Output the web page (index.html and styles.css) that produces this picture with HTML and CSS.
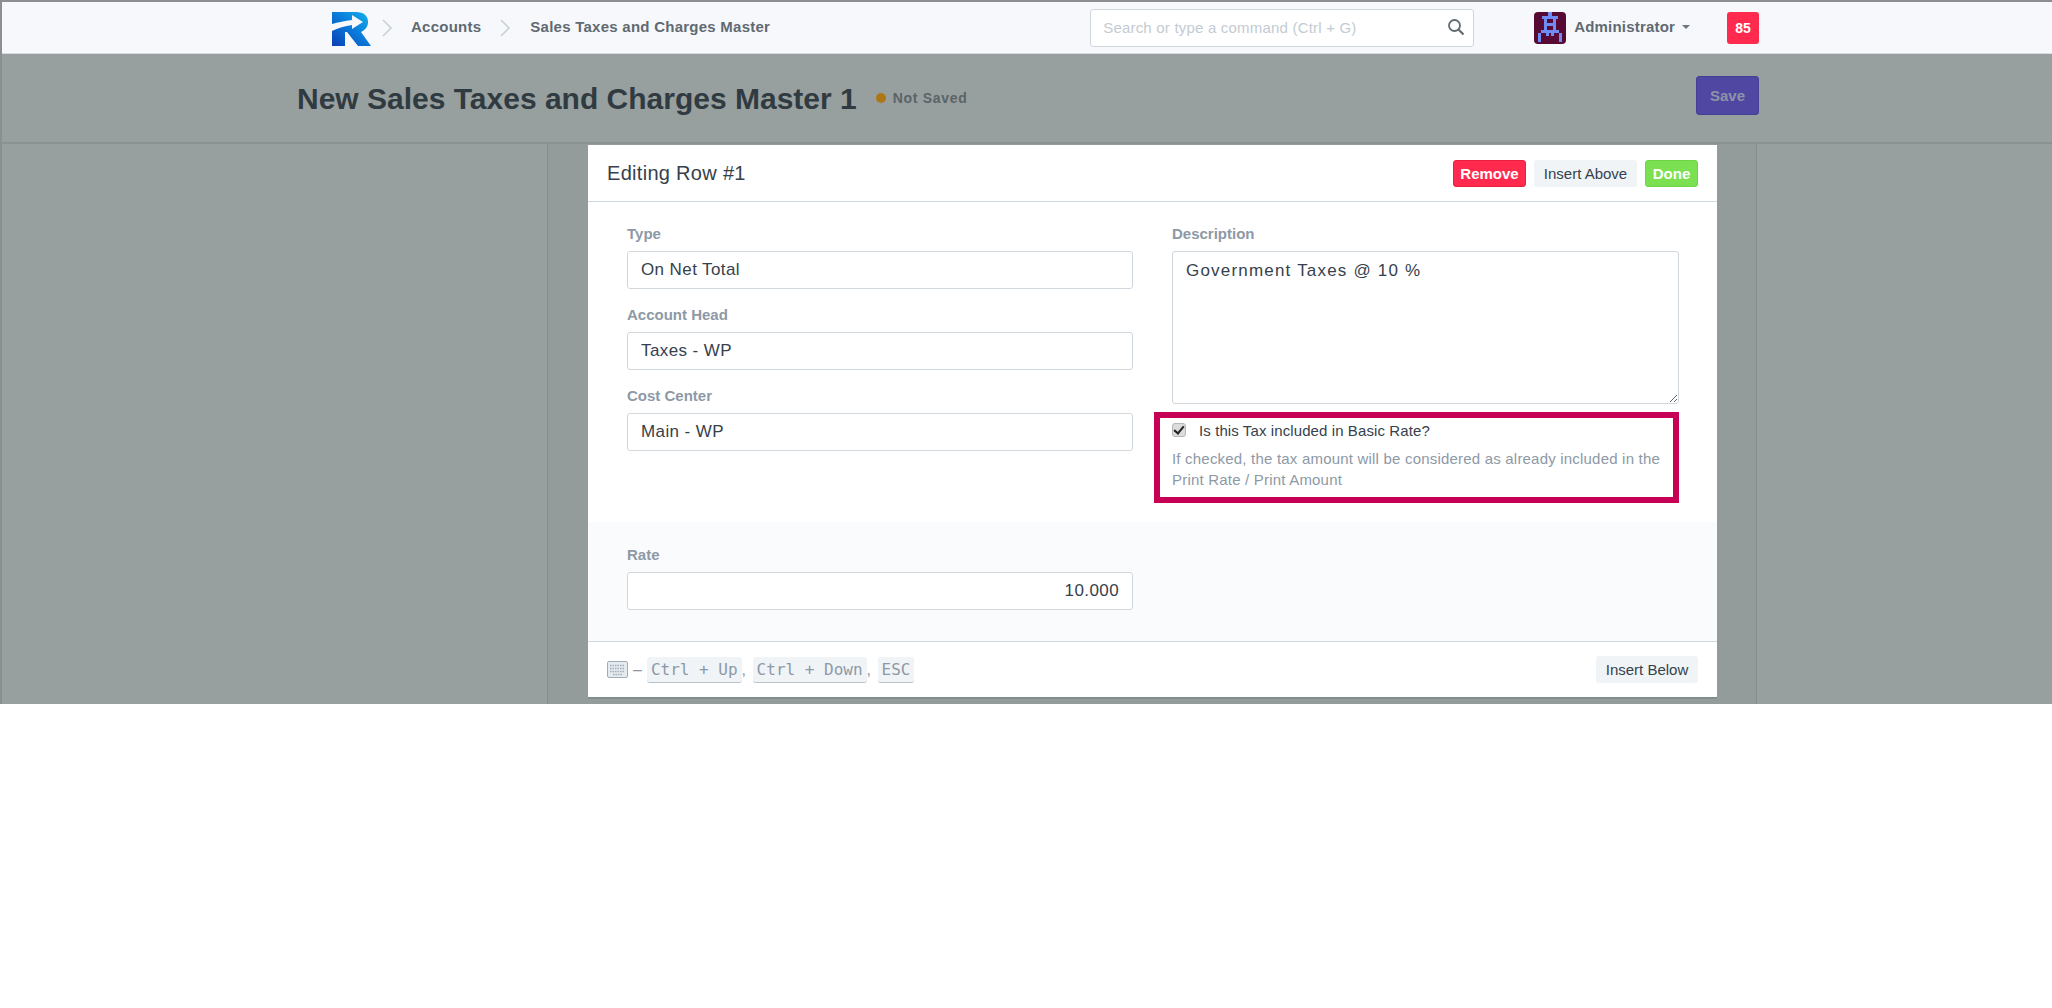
FILE: index.html
```html
<!DOCTYPE html>
<html lang="en">
<head>
  <meta charset="UTF-8" />
  <title>New Sales Taxes and Charges Master 1</title>
  <link rel="stylesheet" href="styles.css">
</head>
<body>
<div class="app">

  <nav class="navbar">
    <div class="container nav-inner">
      <svg class="logo" viewBox="0 0 39 34" width="39" height="34">
        <defs>
          <linearGradient id="logoBlue" x1="0" y1="1" x2="1" y2="0">
            <stop offset="0" stop-color="#0a3fb5"/>
            <stop offset="0.55" stop-color="#0a7fdc"/>
            <stop offset="1" stop-color="#12b5ea"/>
          </linearGradient>
        </defs>
        <path fill="url(#logoBlue)" d="M0 0H24C32 0 36 4 36 10C36 15 33 18 29 20L39 34H26L15 20H13V34H0Z"/>
        <path fill="#f7f8fb" d="M0 19V12C6 10 13 9 20 8V3L31 10L20 17V13C13 14 6 16 0 19Z"/>
      </svg>
      <svg class="crumb-sep" viewBox="0 0 12 18" width="12" height="18"><path d="M2 1L10 9L2 17" fill="none" stroke="#c8d0d8" stroke-width="1.6"/></svg>
      <a class="crumb">Accounts</a>
      <svg class="crumb-sep" viewBox="0 0 12 18" width="12" height="18"><path d="M2 1L10 9L2 17" fill="none" stroke="#c8d0d8" stroke-width="1.6"/></svg>
      <a class="crumb">Sales Taxes and Charges Master</a>

      <div class="search">
        <input type="text" placeholder="Search or type a command (Ctrl + G)">
        <svg viewBox="0 0 18 18" width="18" height="18"><circle cx="7.5" cy="7.5" r="5.5" fill="none" stroke="#5f6a72" stroke-width="1.8"/><path d="M11.5 11.5L16.5 16.5" stroke="#5f6a72" stroke-width="2.2"/></svg>
      </div>

      <svg class="avatar" viewBox="0 0 32 32" width="32" height="32">
        <rect width="32" height="32" rx="4" fill="#560a34"/>
        <g fill="#6f8cf5">
          <rect x="14" y="0" width="4" height="4"/>
          <rect x="8" y="4" width="16" height="3"/>
          <rect x="10" y="7" width="3" height="12"/>
          <rect x="19" y="7" width="3" height="12"/>
          <rect x="13" y="11" width="6" height="3"/>
          <rect x="7" y="18" width="18" height="3"/>
          <rect x="4" y="21" width="3" height="9"/>
          <rect x="25" y="21" width="3" height="9"/>
          <rect x="12" y="21" width="3" height="3"/>
          <rect x="17" y="21" width="3" height="3"/>
        </g>
      </svg>
      <a class="user">Administrator</a>
      <span class="caret"></span>
      <span class="badge">85</span>
    </div>
  </nav>

  <header class="page-head">
    <div class="container head-inner">
      <h1 class="title">New Sales Taxes and Charges Master 1</h1>
      <span class="dot"></span>
      <span class="status">Not Saved</span>
      <button class="btn-save">Save</button>
    </div>
  </header>

  <div class="container layout">
    <div class="sidebar"></div>
    <main class="main">
      <div class="grid-form">

        <div class="form-head">
          <span class="form-title">Editing Row #1</span>
          <button class="btn btn-red">Remove</button>
          <button class="btn btn-light btn-above">Insert Above</button>
          <button class="btn btn-green">Done</button>
        </div>

        <div class="form-body">
          <div class="col">
            <label class="field-label">Type</label>
            <input class="control" type="text" value="On Net Total">
            <label class="field-label">Account Head</label>
            <input class="control" type="text" value="Taxes - WP">
            <label class="field-label">Cost Center</label>
            <input class="control" type="text" value="Main - WP">
          </div>
          <div class="col">
            <label class="field-label">Description</label>
            <textarea class="control desc">Government Taxes @ 10 %</textarea>
            <div class="highlight">
              <label class="check-row"><input type="checkbox" checked> Is this Tax included in Basic Rate?</label>
              <p class="help">If checked, the tax amount will be considered as already included in the Print Rate / Print Amount</p>
            </div>
          </div>
        </div>

        <div class="form-rate">
          <div class="col">
            <label class="field-label">Rate</label>
            <input class="control right" type="text" value="10.000">
          </div>
        </div>

        <div class="form-foot">
          <svg class="kbd-icon" viewBox="0 0 21 17" width="21" height="17">
            <rect x="0.5" y="0.5" width="20" height="16" rx="1.5" fill="#e6ebf0" stroke="#a3adb8"/>
            <path d="M3 4.5h15M3 7.5h15M3 10.5h15M6 13.5h9" stroke="#a3adb8" stroke-width="1.4" stroke-dasharray="1.5 1"/>
          </svg>
          <span class="dash">–</span>
          <kbd>Ctrl + Up</kbd><span class="comma">,</span>
          <kbd>Ctrl + Down</kbd><span class="comma">,</span>
          <kbd>ESC</kbd>
          <button class="btn btn-light btn-below">Insert Below</button>
        </div>

      </div>
    </main>
  </div>

</div>
</body>
</html>
```

FILE: styles.css
```css
html, body {
  margin: 0;
  background: #fff;
}
body {
  font-family: "Liberation Sans", Arial, sans-serif;
  color: #36414c;
}
.app {
  background: #989f9f;
  border-top: 2px solid #8b8f8f;
  border-left: 2px solid #8b8f8f;
}
.container {
  width: 1462px;
  margin: 0 auto;
}

/* navbar */
.navbar {
  height: 51px;
  background: #f7f8fb;
  border-bottom: 1px solid #d8dde2;
}
.nav-inner {
  display: flex;
  align-items: center;
  height: 51px;
  padding-left: 36px;
  box-sizing: border-box;
}
.logo {
  margin-top: 3px;
}
.crumb-sep {
  margin: 0 18px 0 10px;
}
.crumb {
  margin-top: -2px;
  font-size: 15px;
  font-weight: bold;
  letter-spacing: 0.25px;
  color: #5f6a72;
}
.crumb + .crumb-sep {
  margin-left: 18px;
  margin-right: 19px;
}
.search {
  position: relative;
  margin-left: 320px;
  width: 384px;
  height: 38px;
}
.search input {
  width: 100%;
  height: 100%;
  box-sizing: border-box;
  padding: 0 40px 0 12px;
  border: 1px solid #d1d8dd;
  border-radius: 3px;
  background: #fff;
  font: 15px "Liberation Sans", Arial, sans-serif;
  letter-spacing: 0.2px;
}
.search input::placeholder {
  color: #c3cbd3;
}
.search svg {
  position: absolute;
  right: 9px;
  top: 9px;
}
.avatar {
  margin-left: 60px;
}
.user {
  margin-top: -2px;
  margin-left: 8px;
  font-size: 15px;
  font-weight: bold;
  letter-spacing: 0.2px;
  color: #5f6a72;
}
.caret {
  margin-top: -2px;
  margin-left: 7px;
  border-left: 4px solid transparent;
  border-right: 4px solid transparent;
  border-top: 4px solid #6c7680;
}
.badge {
  margin-left: auto;
  margin-right: -1px;
  width: 32px;
  height: 32px;
  line-height: 32px;
  border-radius: 3px;
  background: #ff2a4d;
  color: #fff;
  font-size: 14px;
  font-weight: bold;
  text-align: center;
}

/* page head */
.page-head {
  height: 88px;
  border-bottom: 2px solid #8a9292;
}
.head-inner {
  display: flex;
  align-items: center;
  height: 88px;
}
.title {
  margin: 2px 0 0 1px;
  font-size: 30px;
  font-weight: bold;
  color: #303b41;
}
.dot {
  width: 10px;
  height: 10px;
  margin-left: 19px;
  border-radius: 50%;
  background: #ad7716;
}
.status {
  margin-left: 7px;
  font-size: 14px;
  font-weight: bold;
  letter-spacing: 0.7px;
  color: #5a6468;
}
.btn-save {
  margin-left: auto;
  margin-right: -1px;
  margin-top: -6px;
  width: 63px;
  height: 39px;
  border: 1px solid #473f96;
  border-radius: 3px;
  background: #5047a2;
  color: #8f93a9;
  font: bold 15px "Liberation Sans", Arial, sans-serif;
}

/* layout */
.layout {
  display: flex;
}
.sidebar {
  width: 251px;
}
.main {
  width: 1210px;
  box-sizing: border-box;
  padding: 0 39px 7px 40px;
  background: #939c9b;
  border-left: 1px solid #838d8c;
  border-right: 1px solid #838d8c;
}
.grid-form {
  background: #fff;
  margin-top: 1px;
  box-shadow: 0 2px 0 #838d8c;
}

.form-head {
  display: flex;
  align-items: center;
  gap: 8px;
  height: 56px;
  padding: 0 19px;
  border-bottom: 1px solid #d1d8dd;
}
.form-title {
  margin-right: auto;
  font-size: 20px;
  letter-spacing: 0.3px;
  color: #36414c;
}
.btn {
  height: 27px;
  padding: 0;
  border: 1px solid transparent;
  border-radius: 3px;
  font: 15px "Liberation Sans", Arial, sans-serif;
}
.btn-red {
  width: 73px;
  background: #ff2a4d;
  border-color: #e8203f;
  color: #fff;
  font-weight: bold;
}
.btn-light {
  background: #f0f4f7;
  color: #36414c;
}
.btn-above {
  width: 103px;
}
.btn-below {
  width: 102px;
  margin-left: auto;
}
.btn-green {
  width: 53px;
  background: #7be052;
  border-color: #6fd448;
  color: #fff;
  font-weight: bold;
}

.form-body {
  display: grid;
  grid-template-columns: 506px 507px;
  gap: 39px;
  padding: 21px 39px 19px;
}
.field-label {
  display: block;
  height: 20px;
  line-height: 22px;
  margin-bottom: 8px;
  font-size: 15px;
  font-weight: bold;
  color: #8d99a6;
}
.control {
  display: block;
  width: 100%;
  height: 38px;
  box-sizing: border-box;
  margin-bottom: 15px;
  padding: 0 13px;
  border: 1px solid #d1d8dd;
  border-radius: 3px;
  background: #fff;
  color: #36414c;
  font: 17px "Liberation Sans", Arial, sans-serif;
  letter-spacing: 0.4px;
}
.desc {
  height: 153px;
  margin-bottom: 8px;
  padding-top: 9px;
  letter-spacing: 1.2px;
}
.right {
  text-align: right;
}

.highlight {
  margin: 0 0 0 -18px;
  padding: 2px 0 7px 12px;
  width: 525px;
  box-sizing: border-box;
  border: 6px solid #c60055;
}
.check-row {
  display: flex;
  align-items: center;
  height: 20px;
  gap: 13px;
  font-size: 15px;
  letter-spacing: 0.1px;
  color: #36414c;
}
.check-row input {
  appearance: none;
  position: relative;
  margin: 0;
  width: 14px;
  height: 14px;
  box-sizing: border-box;
  border: 1px solid #b5b5b5;
  border-radius: 3px;
  background: #dcdcdc;
}
.check-row input::after {
  content: "";
  position: absolute;
  left: 3px;
  top: 0;
  width: 4px;
  height: 8px;
  border-right: 2px solid #222;
  border-bottom: 2px solid #222;
  transform: rotate(40deg);
}
.help {
  margin: 8px 0 0;
  font-size: 15px;
  letter-spacing: 0.2px;
  line-height: 21px;
  color: #8d99a6;
}

.form-rate {
  padding: 23px 39px 16px;
  background: #fafbfc;
  border-bottom: 1px solid #d1d8dd;
}
.form-rate .col {
  width: 506px;
}
.form-rate .field-label {
  margin-bottom: 7px;
  line-height: 20px;
}

.form-foot {
  display: flex;
  align-items: center;
  height: 55px;
  padding: 0 19px;
  font-size: 16px;
  color: #8d99a6;
}
.dash {
  margin: 0 5px;
}
kbd {
  padding: 3px 4px;
  border-radius: 3px;
  background: #f0f4f7;
  border-bottom: 1px solid #b8c2cc;
  color: #8d99a6;
  font: 16px "DejaVu Sans Mono", monospace;
}
.comma {
  width: 11px;
}
```
